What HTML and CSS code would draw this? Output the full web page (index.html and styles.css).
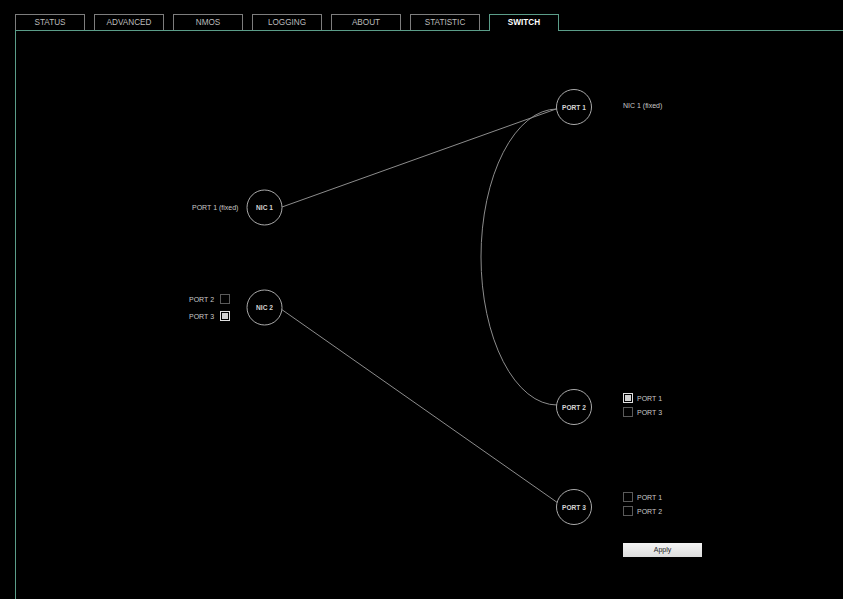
FILE: index.html
```html
<!DOCTYPE html>
<html>
<head>
<meta charset="utf-8">
<link rel="stylesheet" href="styles.css">
</head>
<body>
<nav class="tabs">
  <div class="tab">STATUS</div>
  <div class="tab">ADVANCED</div>
  <div class="tab">NMOS</div>
  <div class="tab">LOGGING</div>
  <div class="tab">ABOUT</div>
  <div class="tab">STATISTIC</div>
  <div class="tab active">SWITCH</div>
</nav>
<main class="panel">
  <div class="diagram">
    <svg class="links" viewBox="16 31 827 568" width="827" height="568">
      <g class="wires">
        <line x1="282" y1="207" x2="556" y2="109"/>
        <line x1="281" y1="309" x2="558" y2="503"/>
        <path d="M557 109 A76 148 0 0 0 557 405"/>
      </g>
      <g class="node">
        <circle cx="264.5" cy="207.5" r="17.5"/>
        <text x="264.5" y="210">NIC 1</text>
      </g>
      <g class="node">
        <circle cx="264.5" cy="307.5" r="17.5"/>
        <text x="264.5" y="310">NIC 2</text>
      </g>
      <g class="node">
        <circle cx="574" cy="107" r="17.5"/>
        <text x="574" y="109.5">PORT 1</text>
      </g>
      <g class="node">
        <circle cx="574" cy="407" r="17.5"/>
        <text x="574" y="409.5">PORT 2</text>
      </g>
      <g class="node">
        <circle cx="574" cy="507" r="17.5"/>
        <text x="574" y="509.5">PORT 3</text>
      </g>
    </svg>

    <div class="note nic1-note">PORT 1 (fixed)</div>
    <div class="note port1-note">NIC 1 (fixed)</div>

    <div class="opts opts-left nic2-opts">
      <div class="opt"><span>PORT 2</span><i class="box"></i></div>
      <div class="opt"><span>PORT 3</span><i class="box on"></i></div>
    </div>

    <div class="opts port2-opts">
      <div class="opt"><i class="box on"></i><span>PORT 1</span></div>
      <div class="opt"><i class="box"></i><span>PORT 3</span></div>
    </div>

    <div class="opts port3-opts">
      <div class="opt"><i class="box"></i><span>PORT 1</span></div>
      <div class="opt"><i class="box"></i><span>PORT 2</span></div>
    </div>

    <button class="apply">Apply</button>
  </div>
</main>
</body>
</html>
```
FILE: styles.css
```css
html, body {
  margin: 0;
  padding: 0;
  background: #000;
  height: 100%;
  overflow: hidden;
}
body {
  font-family: "Liberation Sans", Arial, sans-serif;
  color: #c8c8c8;
}
.tabs {
  display: flex;
  gap: 9px;
  padding: 14px 0 0 15px;
  height: 16px;
}
.tab {
  box-sizing: border-box;
  width: 70px;
  height: 16px;
  border: 1px solid #7d7d7d;
  border-bottom: none;
  font-size: 8.2px;
  line-height: 15px;
  text-align: center;
  color: #bdbdbd;
}
.tab.active {
  position: relative;
  z-index: 2;
  height: 17px;
  border-color: #5b9d89;
  background: #000;
  color: #fff;
  font-weight: bold;
}
.panel {
  margin-left: 15px;
  border-top: 1px solid #5b9d89;
  border-left: 1px solid #5b9d89;
  height: 568px;
}
.diagram {
  position: relative;
  width: 100%;
  height: 100%;
}
.links {
  position: absolute;
  left: 0;
  top: 0;
}
.wires line, .wires path {
  stroke: #8c8c8c;
  stroke-width: 1;
  fill: none;
}
.node circle {
  fill: #000;
  stroke: #aaaaaa;
  stroke-width: 1;
}
.node text {
  fill: #d4d4d4;
  font-family: "Liberation Sans", Arial, sans-serif;
  font-size: 6.6px;
  font-weight: bold;
  text-anchor: middle;
}
.note {
  position: absolute;
  font-size: 7px;
  line-height: 8px;
  color: #c8c8c8;
  white-space: nowrap;
}
.nic1-note { left: 176px; top: 173px; }
.port1-note { left: 607px; top: 71px; }
.opts {
  position: absolute;
  display: flex;
  flex-direction: column;
  gap: 4px;
}
.opt {
  display: flex;
  align-items: center;
  gap: 4px;
  height: 10px;
  font-size: 7px;
  color: #c8c8c8;
  white-space: nowrap;
}
.opts-left { gap: 7px; }
.opts-left .opt { gap: 0; }
.opts-left .opt span { width: 31px; }
.nic2-opts { left: 173px; top: 263px; }
.port2-opts { left: 607px; top: 362px; }
.port3-opts { left: 607px; top: 461px; }
.box {
  box-sizing: border-box;
  display: block;
  width: 10px;
  height: 10px;
  border: 1px solid #5a5a5a;
}
.box.on {
  border-color: #e0e0e0;
  padding: 1px;
}
.box.on::after {
  content: "";
  display: block;
  width: 6px;
  height: 6px;
  background: #d0d0d0;
}
.apply {
  position: absolute;
  left: 607px;
  top: 512px;
  width: 79px;
  height: 14px;
  padding: 0;
  border: none;
  background: linear-gradient(#f4f4f4, #dcdcdc);
  color: #222;
  font-family: "Liberation Sans", Arial, sans-serif;
  font-size: 7px;
  line-height: 14px;
  text-align: center;
}
```
